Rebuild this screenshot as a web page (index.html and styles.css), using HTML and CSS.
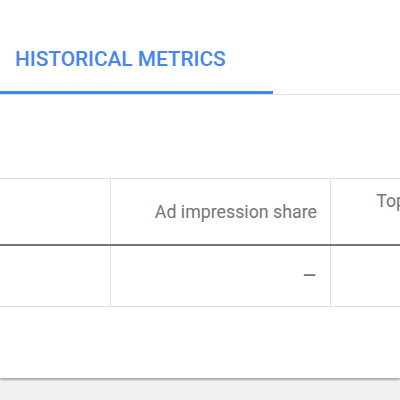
FILE: index.html
```html
<!DOCTYPE html>
<html>
<head>
<meta charset="utf-8">
<link rel="stylesheet" href="styles.css">
</head>
<body>
<div class="card">
  <div class="tabs">
    <div class="tab active">HISTORICAL METRICS</div>
  </div>
  <div class="grid">
    <div class="row head">
      <div class="cell left">Competition</div>
      <div class="cell">Ad impression share</div>
      <div class="cell">Top of page bid<br>(low range)</div>
    </div>
    <div class="row body">
      <div class="cell left"></div>
      <div class="cell dash">–</div>
      <div class="cell dash">–</div>
    </div>
  </div>
</div>
</body>
</html>
```

FILE: styles.css
```css
html, body {
  margin: 0;
  padding: 0;
  background: #f1f1f1;
  font-family: Roboto, "Liberation Sans", sans-serif;
  overflow: hidden;
  width: 400px;
  height: 400px;
}

.card {
  background: #fff;
  height: 378px;
  box-shadow: 0 2px 2px rgba(0,0,0,0.28), 0 0 2px rgba(0,0,0,0.12);
  overflow: hidden;
}

.tabs {
  display: flex;
  border-bottom: 1px solid #e0e0e0;
}

.tab {
  width: 258px;
  padding: 49px 0 22px 15px;
  line-height: 20px;
  font-size: 20.8px;
  font-weight: 500;
  color: #4285f4;
  border-bottom: 3px solid #4285f4;
  white-space: nowrap;
}

.grid {
  margin-top: 83px;
  margin-left: -134px;
  width: 660px;
}

.row {
  display: grid;
  grid-template-columns: 245px 220px 182px;
}

.row.head {
  border-top: 1px solid #e0e0e0;
  border-bottom: 2px solid #757575;
  height: 65px;
}

.row.body {
  border-bottom: 1px solid #e0e0e0;
  height: 60px;
}

.cell {
  border-right: 1px solid #e0e0e0;
  display: flex;
  align-items: center;
  justify-content: flex-end;
  text-align: right;
  padding-right: 13px;
  font-size: 17.8px;
  line-height: 22px;
  color: #757575;
}

.cell.left {
  justify-content: flex-start;
  text-align: left;
  padding-left: 14px;
}

.cell.dash {
  font-size: 23px;
  color: #757575;
  padding-top: 2px;
}
```
